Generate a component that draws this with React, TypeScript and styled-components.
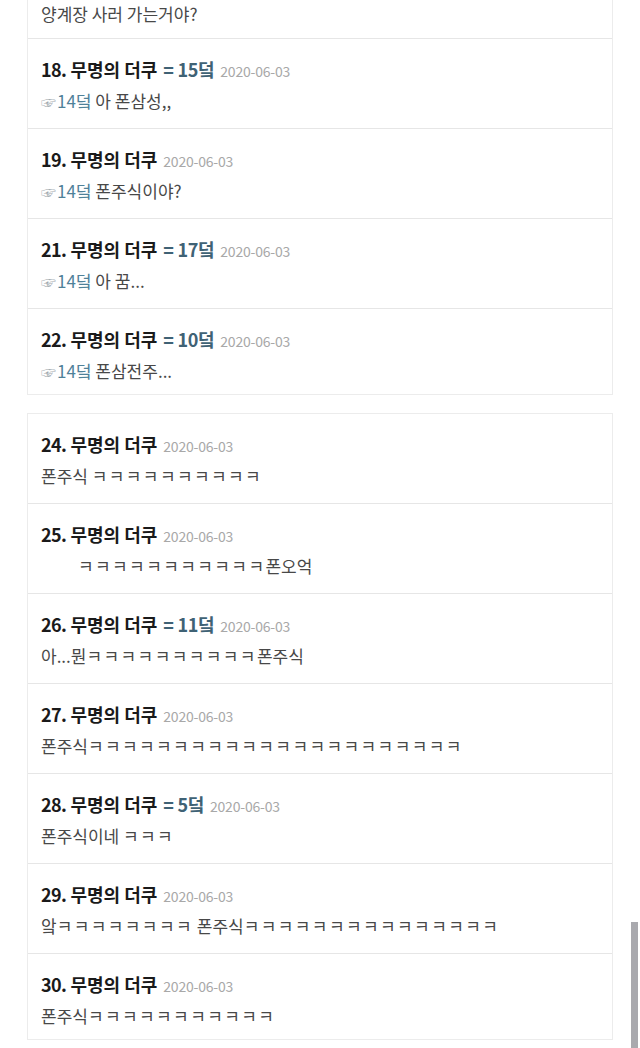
import React from "react";
import styled, { createGlobalStyle } from "styled-components";

const GlobalStyle = createGlobalStyle`
  html, body {
    margin: 0;
    padding: 0;
    background: #ffffff;
    overflow: hidden;
  }
  body {
    font-family: "Noto Sans CJK KR", "Noto Sans", sans-serif;
  }
`;

const Page = styled.div`
  width: 640px;
  height: 1048px;
  overflow: hidden;
  padding: 0 27px;
  box-sizing: border-box;
  display: flex;
  flex-direction: column;
  gap: 18px;
`;

const Card = styled.div<{ $cut?: boolean }>`
  background: #ffffff;
  border: 1px solid #ececec;
  border-top: ${(p) => (p.$cut ? "none" : "1px solid #ececec")};
`;

const Row = styled.div<{ $first?: boolean }>`
  padding: ${(p) => (p.$first ? "3px 13px 13px" : "19px 13px 16px")};
  border-top: ${(p) => (p.$first ? "none" : "1px solid #e6e6e6")};
  &:first-child {
    border-top: none;
  }
  &:last-child {
    padding-bottom: 12px;
  }
`;

const Title = styled.div`
  display: flex;
  align-items: baseline;
  gap: 6px;
  height: 22px;
  line-height: 22px;
  font-size: 18px;
`;

const Name = styled.span`
  font-weight: 700;
  color: #1a1a1a;
`;

const Num = styled.span`
  font-weight: 700;
  letter-spacing: -0.6px;
`;

const Reply = styled.span`
  font-weight: 700;
  color: #3f6275;
  letter-spacing: -0.3px;
`;

const DateText = styled.span`
  font-size: 14px;
  color: #a8a8a8;
  letter-spacing: -0.2px;
`;

const Body = styled.div<{ $indent?: number }>`
  margin-top: 10px;
  height: 22px;
  line-height: 22px;
  font-size: 17px;
  color: #484848;
  padding-left: ${(p) => p.$indent ?? 0}px;
  white-space: nowrap;
`;

const Jamo = styled.span`
  letter-spacing: 1.4px;
`;

const Link = styled.span`
  color: #4f8199;
`;

const Hand = styled.span`
  color: #9fa9ae;
  font-size: 15px;
  margin-right: 1px;
`;

const ScrollBar = styled.div`
  position: fixed;
  right: 2px;
  top: 922px;
  width: 7px;
  height: 130px;
  background: #a9a9ae;
`;

type Comment = {
  no: number;
  reply?: number;
  ref?: number;
  text: string;
  indent?: number;
};

const k = (n: number) => "ㅋ".repeat(n);

const first: Comment[] = [
  { no: 18, reply: 15, ref: 14, text: "아 폰삼성,," },
  { no: 19, ref: 14, text: "폰주식이야?" },
  { no: 21, reply: 17, ref: 14, text: "아 꿈..." },
  { no: 22, reply: 10, ref: 14, text: "폰삼전주..." },
];

const second: Comment[] = [
  { no: 24, text: "폰주식 " + k(10) },
  { no: 25, text: k(11) + "폰오억", indent: 37 },
  { no: 26, reply: 11, text: "아...뭔" + k(10) + "폰주식" },
  { no: 27, text: "폰주식" + k(22) },
  { no: 28, reply: 5, text: "폰주식이네 " + k(3) },
  { no: 29, text: "앜" + k(8) + " 폰주식" + k(15) },
  { no: 30, text: "폰주식" + k(11) },
];

// ㅋ runs render a little narrower than in the screenshot's font
function Text({ value }: { value: string }) {
  return (
    <>
      {value.split(/(ㅋ+)/).map((part, i) =>
        part.startsWith("ㅋ") ? <Jamo key={i}>{part}</Jamo> : part
      )}
    </>
  );
}

function CommentRow({ c }: { c: Comment }) {
  return (
    <Row>
      <Title>
        <Name>
          <Num>{c.no}.</Num> 무명의 더쿠
        </Name>
        {c.reply !== undefined && <Reply>= {c.reply}덬</Reply>}
        <DateText>2020-06-03</DateText>
      </Title>
      <Body $indent={c.indent}>
        {c.ref !== undefined && (
          <>
            <Hand>☞</Hand>
            <Link>{c.ref}덬</Link>{" "}
          </>
        )}
        <Text value={c.text} />
      </Body>
    </Row>
  );
}

export default function App() {
  return (
    <>
      <GlobalStyle />
      <Page>
        <Card $cut>
          <Row $first>
            <Body style={{ marginTop: 0 }}>양계장 사러 가는거야?</Body>
          </Row>
          {first.map((c) => (
            <CommentRow key={c.no} c={c} />
          ))}
        </Card>
        <Card>
          {second.map((c) => (
            <CommentRow key={c.no} c={c} />
          ))}
        </Card>
      </Page>
      <ScrollBar />
    </>
  );
}
